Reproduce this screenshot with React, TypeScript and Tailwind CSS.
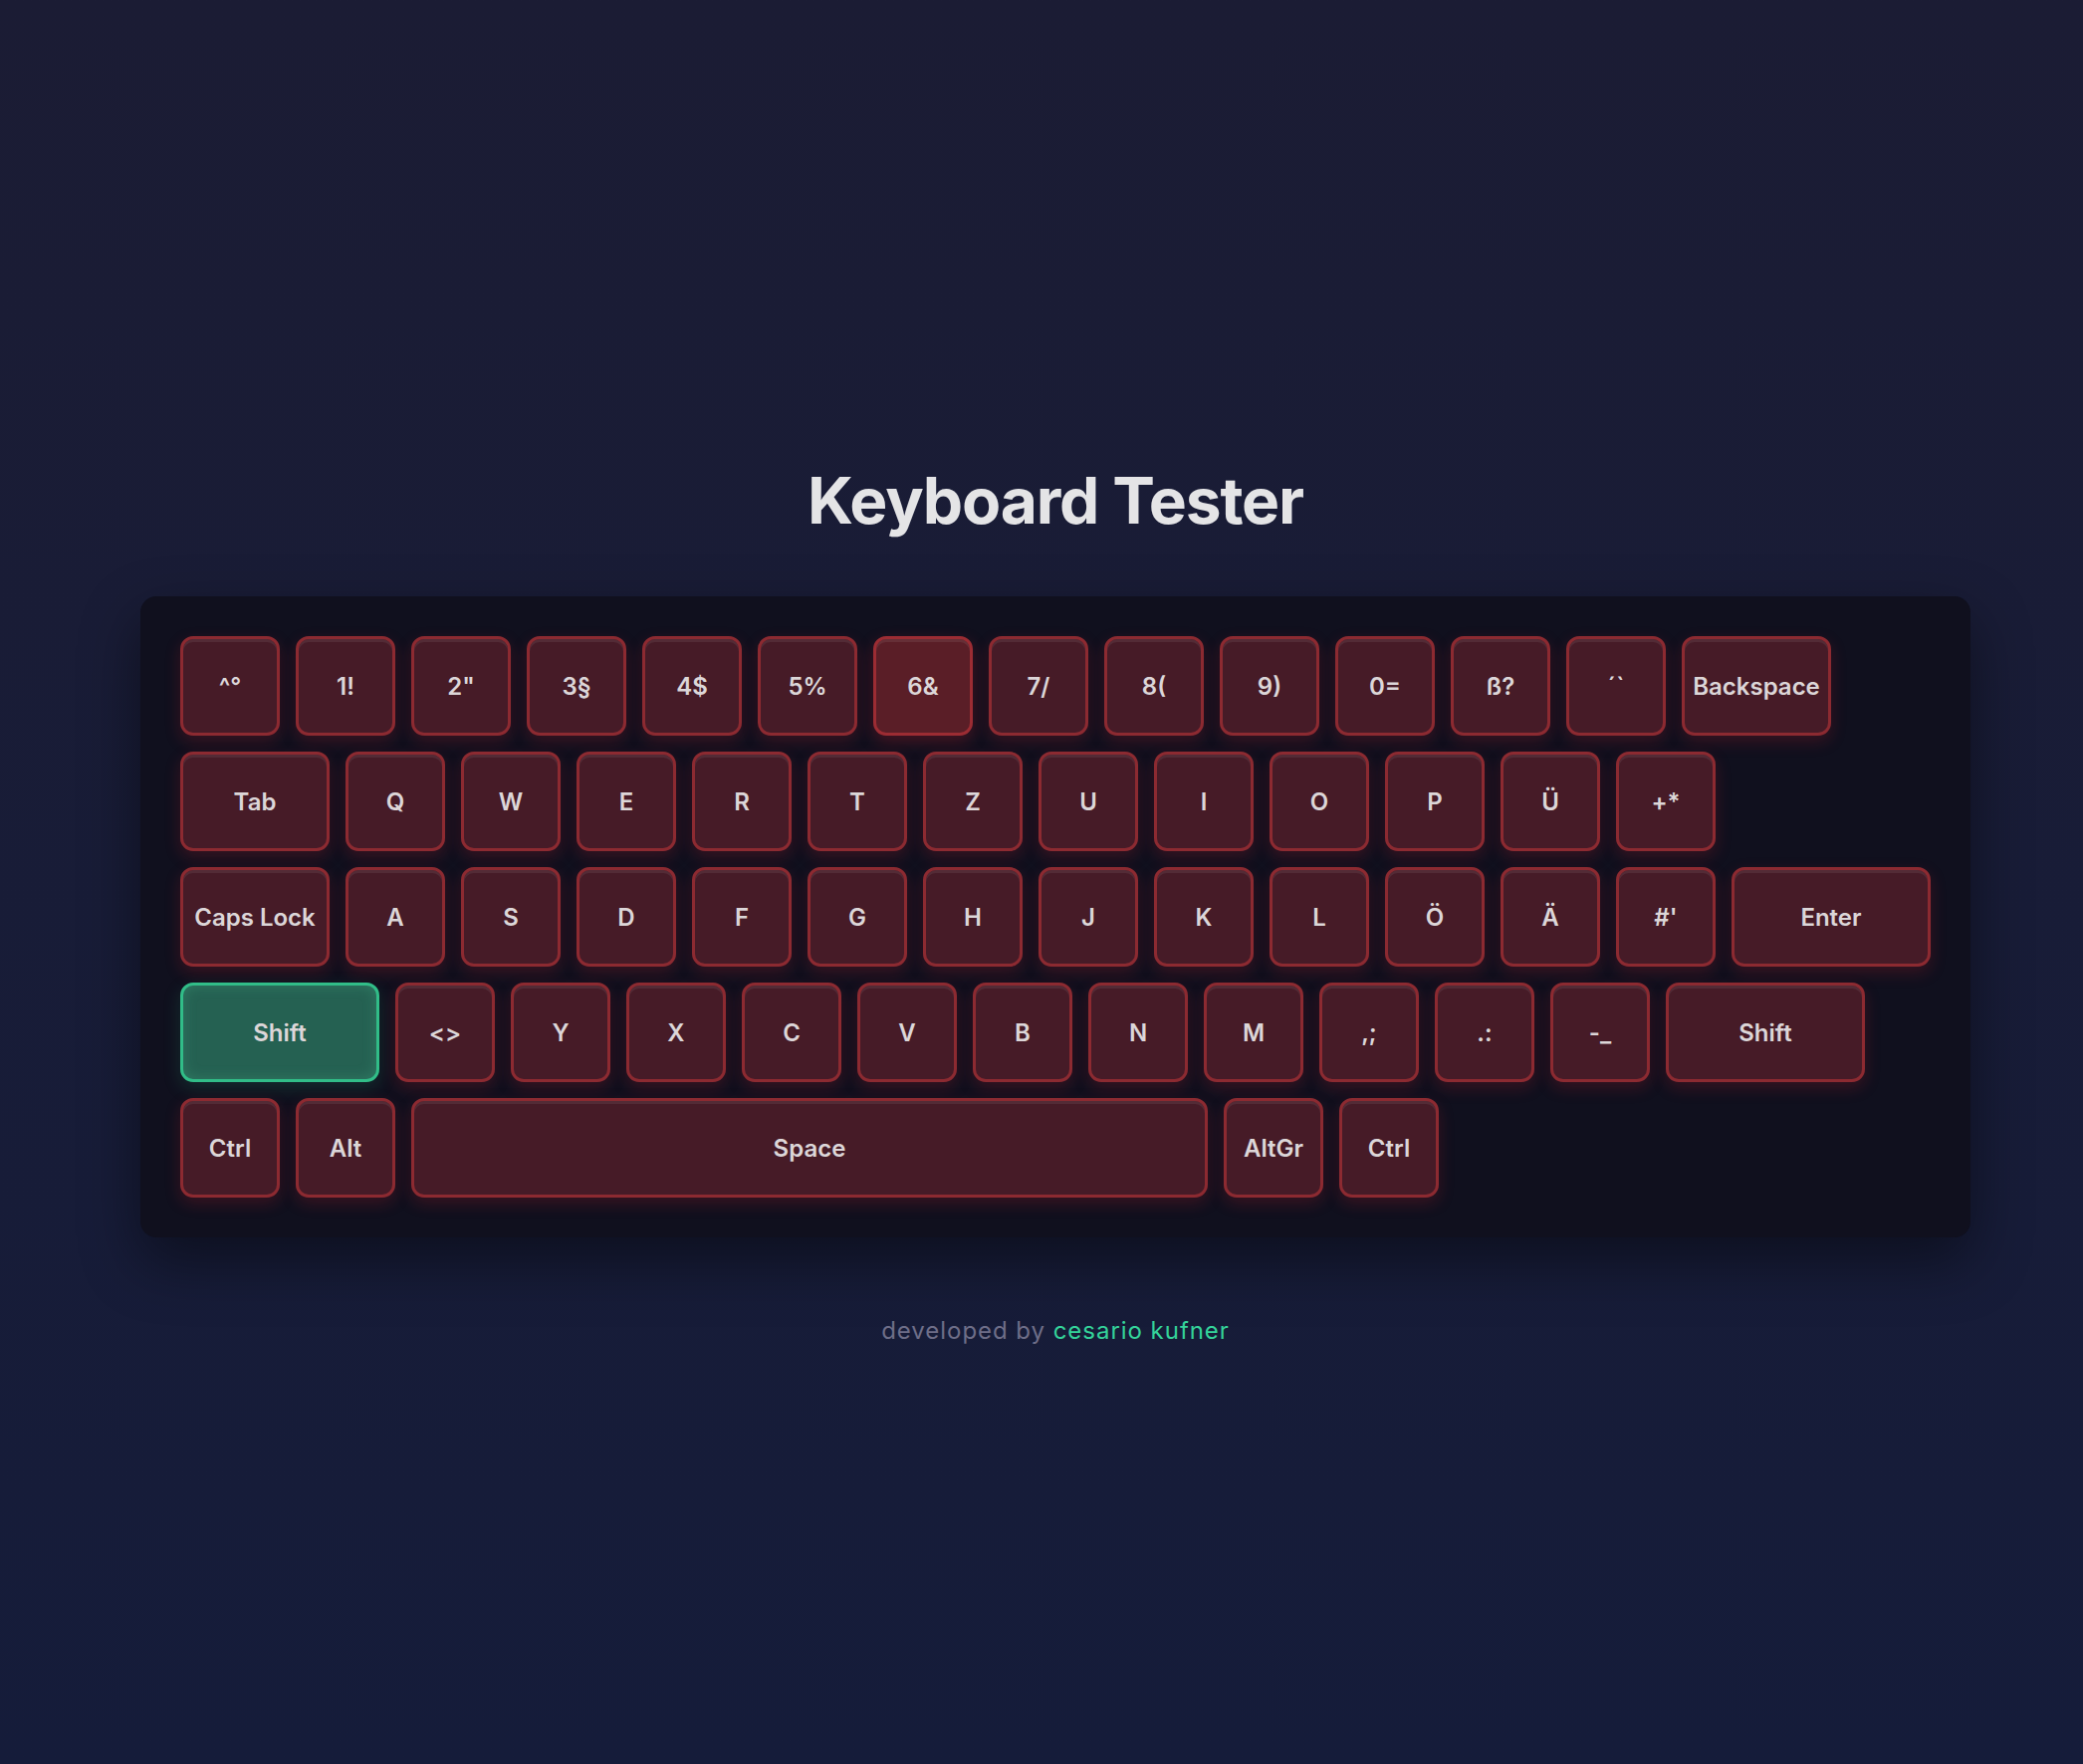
import React from 'react';

type KeyDef = {
  label: string;
  w?: 100 | 150 | 200 | 800;
  state?: 'idle' | 'hover' | 'pressed';
};

const rows: KeyDef[][] = [
  [
    { label: '^°' }, { label: '1!' }, { label: '2"' }, { label: '3§' }, { label: '4$' },
    { label: '5%' }, { label: '6&', state: 'hover' }, { label: '7/' }, { label: '8(' },
    { label: '9)' }, { label: '0=' }, { label: 'ß?' }, { label: '´`' },
    { label: 'Backspace', w: 150 },
  ],
  [
    { label: 'Tab', w: 150 }, { label: 'Q' }, { label: 'W' }, { label: 'E' }, { label: 'R' },
    { label: 'T' }, { label: 'Z' }, { label: 'U' }, { label: 'I' }, { label: 'O' },
    { label: 'P' }, { label: 'Ü' }, { label: '+*' },
  ],
  [
    { label: 'Caps Lock', w: 150 }, { label: 'A' }, { label: 'S' }, { label: 'D' }, { label: 'F' },
    { label: 'G' }, { label: 'H' }, { label: 'J' }, { label: 'K' }, { label: 'L' },
    { label: 'Ö' }, { label: 'Ä' }, { label: "#'" }, { label: 'Enter', w: 200 },
  ],
  [
    { label: 'Shift', w: 200, state: 'pressed' }, { label: '<>' }, { label: 'Y' }, { label: 'X' },
    { label: 'C' }, { label: 'V' }, { label: 'B' }, { label: 'N' }, { label: 'M' },
    { label: ',;' }, { label: '.:' }, { label: '-_' }, { label: 'Shift', w: 200 },
  ],
  [
    { label: 'Ctrl' }, { label: 'Alt' }, { label: 'Space', w: 800 }, { label: 'AltGr' }, { label: 'Ctrl' },
  ],
];

const widthClass: Record<number, string> = {
  100: 'w-[100px]',
  150: 'w-[150px]',
  200: 'w-[200px]',
  800: 'w-[800px]',
};

// Farben je nach Tastenzustand
const stateClass = {
  idle: 'bg-[#461b27] border-[#8c2a31] shadow-[inset_0_3px_0_rgba(255,255,255,0.07),0_6px_16px_rgba(200,30,40,0.22)]',
  hover: 'bg-[#5a1e27] border-[#9c2c33] shadow-[inset_0_3px_0_rgba(255,255,255,0.08),0_6px_16px_rgba(200,30,40,0.3)]',
  pressed: 'bg-[#256152] border-[#31bd88] shadow-[inset_0_0_14px_rgba(80,200,150,0.25),0_6px_18px_rgba(40,180,120,0.18)]',
};

function Key({ def }: { def: KeyDef }) {
  const state = def.state ?? 'idle';
  return (
    <div
      className={`${widthClass[def.w ?? 100]} h-[100px] shrink-0 rounded-[13px] border-[3px] flex items-center justify-center pt-[2px] text-[24px] font-semibold text-[#dcd6d8] ${stateClass[state]}`}
    >
      {def.label}
    </div>
  );
}

export default function App() {
  return (
    <div
      className="min-h-screen bg-gradient-to-b from-[#1b1c34] to-[#151c3a] flex flex-col items-center pt-[471px] pl-[28px]"
      style={{ fontFamily: 'Inter, "Noto Sans", sans-serif' }}
    >
      <h1 className="text-[64px] leading-none font-bold text-[#e4e4e6] tracking-[-0.018em]">Keyboard Tester</h1>

      <div className="mt-[64px] bg-[#10101e] rounded-[16px] p-[40px] flex flex-col gap-[16px] shadow-[0_24px_60px_rgba(0,0,0,0.45)]">
        {rows.map((row, i) => (
          <div key={i} className="flex gap-[16px]">
            {row.map((k, j) => (
              <Key key={j} def={k} />
            ))}
          </div>
        ))}
      </div>

      <p className="mt-[76px] text-[24px] tracking-[0.04em] text-[#6e6e88]">
        developed by <span className="text-[#34d39a]">cesario kufner</span>
      </p>
    </div>
  );
}
